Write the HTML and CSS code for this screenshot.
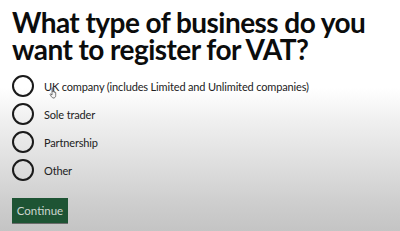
FILE: index.html
```html
<!DOCTYPE html>
<html lang="en">
<head>
<meta charset="utf-8">
<link rel="stylesheet" href="styles.css">
</head>
<body>
<main class="page">
  <h1 class="title">What type of business do you want to register for VAT?</h1>
  <div class="radios">
    <label class="radio"><span class="circle"></span><span class="text">UK company (includes Limited and Unlimited companies)</span>
      <svg class="cursor" width="10" height="12" viewBox="0 0 10 12"><path d="M3 1.2c0-.6.9-.6.9 0V5l.1-.6c0-.6.9-.6.9 0v.7c0-.6.9-.6.9 0v.6c0-.6.9-.6.9 0v3c0 1.5-1 2.3-2.3 2.3H4.5C3.6 11 3 10.5 2.5 9.8L1.2 7.6c-.3-.5.3-1 .7-.6L3 8z" fill="#f4f4f4" stroke="#444" stroke-width=".7" stroke-linejoin="round"/></svg>
    </label>
    <label class="radio"><span class="circle"></span><span class="text">Sole trader</span></label>
    <label class="radio"><span class="circle"></span><span class="text">Partnership</span></label>
    <label class="radio"><span class="circle"></span><span class="text">Other</span></label>
  </div>
  <button class="btn">Continue</button>
</main>
</body>
</html>
```

FILE: styles.css
```css
html, body {
  margin: 0;
  padding: 0;
}
body {
  width: 400px;
  height: 231px;
  overflow: hidden;
  background: linear-gradient(to bottom, #ffffff 0px, #ffffff 88px, #f0f0f0 120px, #dedede 165px, #cdcdcd 205px, #c4c4c4 231px);
  font-family: "Lato", "Liberation Sans", sans-serif;
  color: #0b0c0c;
}
.page {
  padding: 9px 0 0 12px;
  display: flex;
  flex-direction: column;
}
.title {
  margin: 0;
  font-size: 28px;
  line-height: 27px;
  font-weight: 700;
  letter-spacing: -0.55px;
  width: 380px;
}
.radios {
  margin-top: 12px;
  display: flex;
  flex-direction: column;
  gap: 6px;
}
.radio {
  position: relative;
  display: flex;
  align-items: center;
  gap: 10px;
  height: 22px;
}
.circle {
  width: 18px;
  height: 18px;
  border: 2px solid #1a1a1a;
  border-radius: 50%;
  flex: none;
}
.text {
  font-size: 11px;
  letter-spacing: -0.15px;
  color: #222;
}
.cursor {
  position: absolute;
  left: 37px;
  top: 12px;
}
.btn {
  margin-top: 17px;
  align-self: flex-start;
  width: 56px;
  height: 25px;
  background: #1e5434;
  color: #cdd6d0;
  border: none;
  border-radius: 0;
  font-family: "Lato", "Liberation Sans", sans-serif;
  font-size: 11.5px;
  padding: 0;
  box-shadow: 0 1px 0 #6b6b6b;
}
```
